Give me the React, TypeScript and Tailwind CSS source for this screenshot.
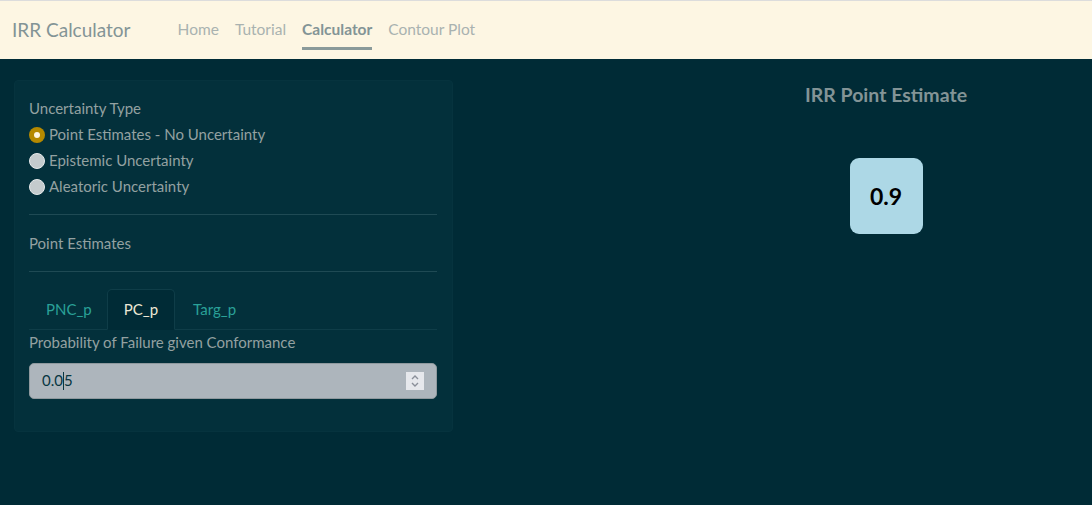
import React from "react";

const font = { fontFamily: "Lato, 'Noto Sans', sans-serif" };

function Radio({ checked, label }: { checked?: boolean; label: string }) {
  return (
    <div className="flex items-center h-[26px]">
      {checked ? (
        <span className="w-[16px] h-[16px] rounded-full bg-[#b58900] flex items-center justify-center mr-[4px]">
          <span className="w-[6px] h-[6px] rounded-full bg-[#fdf6e3]" />
        </span>
      ) : (
        <span className="w-[16px] h-[16px] rounded-full bg-[#c4cbcd] border border-[#e6eaeb] mr-[4px]" />
      )}
      <span className="text-[15px] text-[#93a1a1]">{label}</span>
    </div>
  );
}

export default function App() {
  return (
    <div className="w-[1092px] h-[505px] bg-[#002b36] overflow-hidden" style={font}>
      <nav className="h-[59px] bg-[#fdf6e3] border-t border-[#dcdcdc] flex items-center">
        <div className="ml-[12px] text-[19px] text-[#839496] mr-[39px]">IRR Calculator</div>
        <div className="flex items-stretch h-full text-[15.5px]">
          <div className="px-[8px] flex items-center text-[#a9b2b0]">Home</div>
          <div className="px-[8px] flex items-center text-[#a9b2b0]">Tutorial</div>
          <div className="px-[8px] flex items-center relative">
            <span className="font-bold text-[#839496] relative">
              Calculator
              <span className="absolute left-0 right-0 top-[29px] h-[3px] bg-[#8a9a9a]" />
            </span>
          </div>
          <div className="px-[8px] flex items-center text-[#a9b2b0]">Contour Plot</div>
        </div>
      </nav>
      <div className="flex pt-[21px]">
        <div className="ml-[14px] w-[439px] h-[352px] bg-[#03303b] border border-[#06333e] rounded-[4px] pl-[14px] pr-[15px] pt-[16px]">
          <div className="text-[15px] text-[#93a1a1] mb-[2px]">Uncertainty Type</div>
          <Radio checked label="Point Estimates - No Uncertainty" />
          <Radio label="Epistemic Uncertainty" />
          <Radio label="Aleatoric Uncertainty" />
          <div className="border-t border-[#1f4a54] mt-[14px]" />
          <div className="text-[15px] text-[#93a1a1] mt-[17px] mb-[17px]">Point Estimates</div>
          <div className="border-t border-[#1f4a54]" />
          <div className="mt-[17px] flex border-b border-[#0f3d48] pl-[2px]">
            <div className="px-[15px] h-[40px] flex items-center text-[15px] text-[#2aa198]">PNC_p</div>
            <div className="px-[16px] h-[41px] -mb-px flex items-center text-[15px] text-[#eee8d5] bg-[#002b36] border border-[#0f3d48] border-b-[#002b36] rounded-t-[5px]">PC_p</div>
            <div className="px-[18px] h-[40px] flex items-center text-[15px] text-[#2aa198]">Targ_p</div>
          </div>
          <div className="text-[15px] text-[#93a1a1] mt-[1px] mb-[9px]">Probability of Failure given Conformance</div>
          <div className="h-[36px] bg-[#adb5bc] rounded-[5px] border border-[#8f999e] flex items-center pl-[12px] pr-[12px]">
            <span className="text-[15px] text-[#073642] flex-1 flex items-center">
              0.0<span className="inline-block w-px h-[18px] bg-[#073642]" />5
            </span>
            <span className="w-[18px] h-[18px] bg-[#e6e8ec] flex flex-col items-center justify-center">
              <svg width="10" height="14" viewBox="0 0 10 14" fill="none" stroke="#8a8f99" strokeWidth="1.4">
                <path d="M2 5 L5 2 L8 5" />
                <path d="M2 9 L5 12 L8 9" />
              </svg>
            </span>
          </div>
        </div>
        <div className="flex-1 flex justify-end">
          <div className="w-[412px] flex flex-col items-center">
            <div className="text-[19.5px] font-bold text-[#839496]">IRR Point Estimate</div>
            <div className="mt-[49px] w-[73px] h-[76px] bg-[#add8e6] rounded-[9px] flex items-center justify-center text-[23px] font-bold text-black">
              0.9
            </div>
          </div>
        </div>
      </div>
    </div>
  );
}
